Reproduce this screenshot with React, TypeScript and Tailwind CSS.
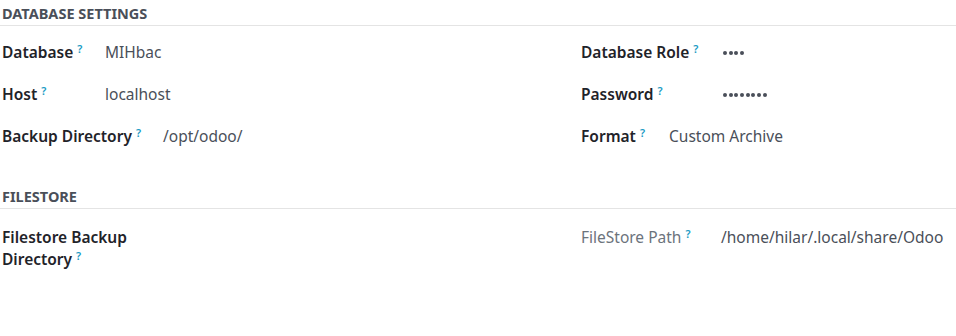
import type { ReactNode } from 'react'

const font = { fontFamily: '"Noto Sans", "Open Sans", sans-serif' }

function Help() {
  return (
    <sup className="relative -top-[5px] ml-[4px] text-[11px] font-semibold text-[#1a9bc4]">
      ?
    </sup>
  )
}

function Dots({ count }: { count: number }) {
  return (
    <span className="flex items-center gap-[1.7px] pt-[2px]">
      {Array.from({ length: count }).map((_, i) => (
        <span className="h-[4px] w-[4px] rounded-full bg-[#4a4f59]" key={i} />
      ))}
    </span>
  )
}

function Field({
  label,
  labelWidth,
  children,
  muted,
}: {
  label: ReactNode
  labelWidth: string
  children: ReactNode
  muted?: boolean
}) {
  return (
    <div className="flex h-[42px] items-start">
      <div
        className={`${labelWidth} shrink-0 text-[15.5px] leading-[22px] ${
          muted ? 'font-normal text-[#6c737c]' : 'font-semibold text-[#1f2329]'
        }`}
      >
        {label}
        <Help />
      </div>
      <div className="flex h-[22px] items-center text-[15.5px] leading-[22px] text-[#4a4f59]">
        {children}
      </div>
    </div>
  )
}

function SectionTitle({ children }: { children: ReactNode }) {
  return (
    <div className="border-b border-[#e4e4e4] pb-[3px] pl-[2px] text-[14.5px] font-bold leading-[18px] text-[#4a4f59]">
      {children}
    </div>
  )
}

export default function App() {
  return (
    <div className="h-[336px] w-[956px] bg-white" style={font}>
      <div className="pt-[4px]">
        <SectionTitle>DATABASE SETTINGS</SectionTitle>
        <div className="flex pl-[2px] pt-[15px]">
          <div className="w-[579px] shrink-0">
            <Field label="Database" labelWidth="w-[103px]">
              MIHbac
            </Field>
            <Field label="Host" labelWidth="w-[103px]">
              localhost
            </Field>
            <Field label="Backup Directory" labelWidth="w-[161px]">
              /opt/odoo/
            </Field>
          </div>
          <div className="flex-1">
            <Field label="Database Role" labelWidth="w-[142px]">
              <Dots count={4} />
            </Field>
            <Field label="Password" labelWidth="w-[142px]">
              <Dots count={8} />
            </Field>
            <Field label="Format" labelWidth="w-[88px]">
              Custom Archive
            </Field>
          </div>
        </div>
      </div>

      <div className="pt-[20px]">
        <SectionTitle>FILESTORE</SectionTitle>
        <div className="flex pl-[2px] pt-[17px]">
          <div className="w-[579px] shrink-0">
            <div className="w-[150px] text-[15.5px] font-semibold leading-[22px] text-[#1f2329]">
              Filestore Backup
              <br />
              Directory
              <Help />
            </div>
          </div>
          <div className="flex-1">
            <Field label="FileStore Path" labelWidth="w-[140px]" muted>
              /home/hilar/.local/share/Odoo
            </Field>
          </div>
        </div>
      </div>
    </div>
  )
}
